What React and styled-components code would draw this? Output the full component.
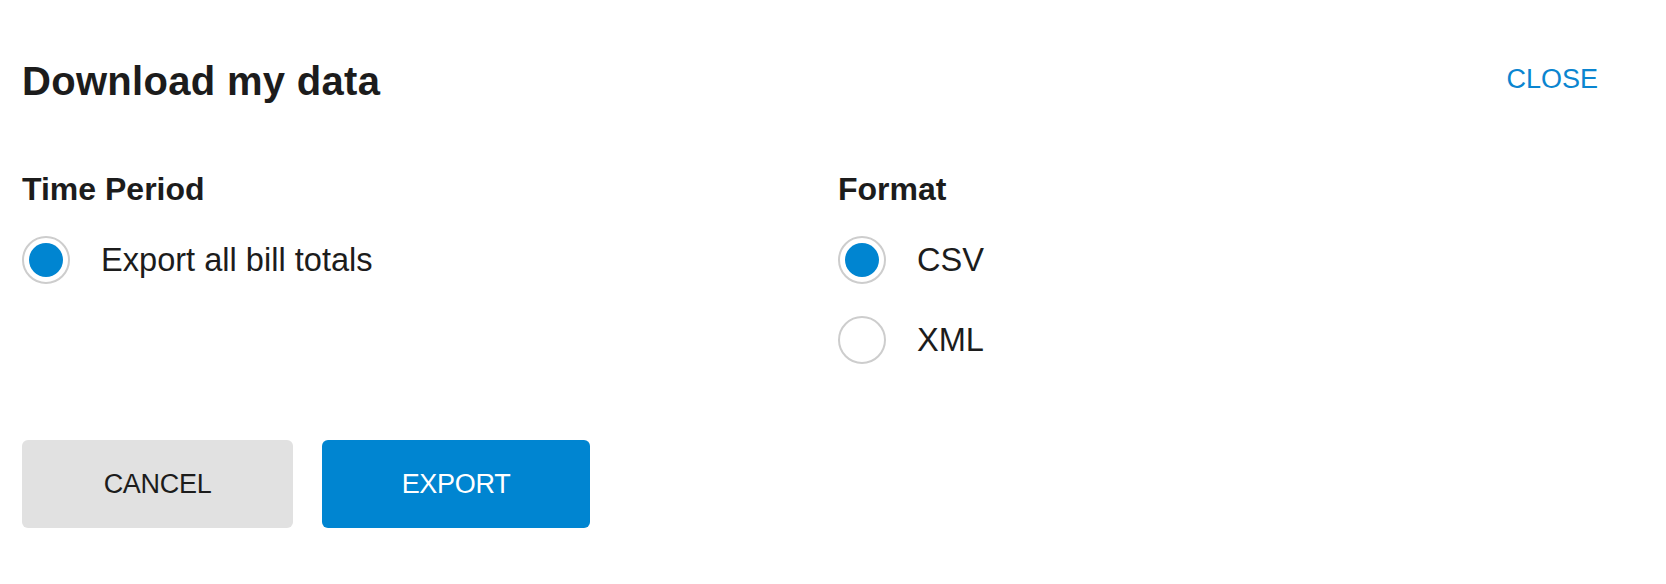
import React, { useState } from 'react';
import styled, { createGlobalStyle } from 'styled-components';

const GlobalStyle = createGlobalStyle`
  body {
    margin: 0;
    background: #ffffff;
    font-family: "Liberation Sans", Arial, Helvetica, sans-serif;
    color: #1c1c1c;
  }
`;

const Dialog = styled.section`
  padding: 57px 68px 0 22px;
`;

const Header = styled.header`
  display: flex;
  justify-content: space-between;
  align-items: center;
  margin-bottom: 66px;

  h1 {
    margin: 0;
    font-size: 40px;
    line-height: 48px;
    font-weight: 700;
    letter-spacing: 0.3px;
  }
`;

const TextButton = styled.button`
  border: none;
  background: none;
  padding: 0;
  font-family: inherit;
  font-size: 27px;
  color: #0a85d0;
  cursor: pointer;
  margin-top: -4px;
`;

const Options = styled.div`
  display: grid;
  grid-template-columns: 816px 1fr;
  align-items: start;
`;

const Group = styled.div`
  display: flex;
  flex-direction: column;
  gap: 32px;

  h2 {
    margin: 0 0 -3px;
    font-size: 32px;
    line-height: 36px;
    font-weight: 700;
  }
`;

const Option = styled.label`
  display: flex;
  align-items: center;
  gap: 31px;
  font-size: 32.6px;
  cursor: pointer;
`;

const Radio = styled.span`
  box-sizing: border-box;
  width: 48px;
  height: 48px;
  border-radius: 50%;
  border: 2px solid #cdcdcd;
  display: flex;
  align-items: center;
  justify-content: center;
  flex-shrink: 0;

  &::after {
    content: '';
    width: 34px;
    height: 34px;
    border-radius: 50%;
    background: ${({ $checked }) => ($checked ? '#0085d1' : 'transparent')};
  }
`;

const Actions = styled.div`
  display: flex;
  gap: 29px;
  margin-top: 76px;
`;

const Button = styled.button`
  width: ${({ $width }) => $width}px;
  height: 88px;
  border: none;
  border-radius: 6px;
  font-family: inherit;
  font-size: 27px;
  letter-spacing: -0.3px;
  cursor: pointer;
  background: ${({ $primary }) => ($primary ? '#0085d1' : '#e1e1e1')};
  color: ${({ $primary }) => ($primary ? '#ffffff' : '#1c1c1c')};
`;

export default function App() {
  const [format, setFormat] = useState('csv');

  return (
    <>
      <GlobalStyle />
      <Dialog>
        <Header>
          <h1>Download my data</h1>
          <TextButton type="button">CLOSE</TextButton>
        </Header>
        <Options>
          <Group>
            <h2>Time Period</h2>
            <Option>
              <Radio $checked />
              Export all bill totals
            </Option>
          </Group>
          <Group>
            <h2>Format</h2>
            <Option onClick={() => setFormat('csv')}>
              <Radio $checked={format === 'csv'} />
              CSV
            </Option>
            <Option onClick={() => setFormat('xml')}>
              <Radio $checked={format === 'xml'} />
              XML
            </Option>
          </Group>
        </Options>
        <Actions>
          <Button type="button" $width={271}>
            CANCEL
          </Button>
          <Button type="button" $width={268} $primary>
            EXPORT
          </Button>
        </Actions>
      </Dialog>
    </>
  );
}
